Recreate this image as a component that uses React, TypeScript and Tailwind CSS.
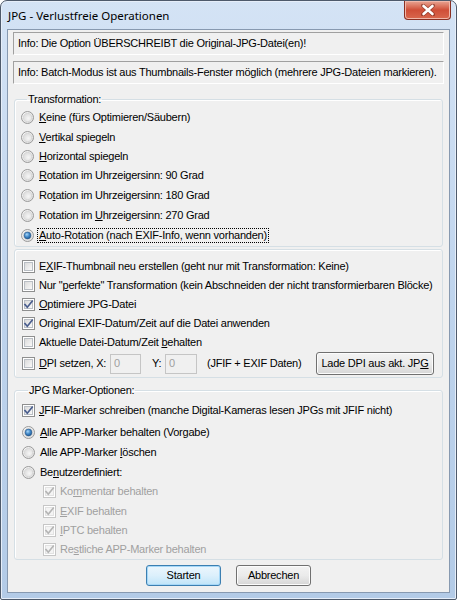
import React from "react";

const FONT = { fontFamily: '"Liberation Sans", Arial, sans-serif' };

function Radio({ checked }: { checked?: boolean }) {
  return (
    <svg width="13" height="13" viewBox="0 0 13 13" className="shrink-0">
      <defs>
        <radialGradient id="rbg" cx="0.35" cy="0.35" r="0.8">
          <stop offset="0" stopColor="#ffffff" />
          <stop offset="1" stopColor="#dadada" />
        </radialGradient>
        <radialGradient id="rin" cx="0.6" cy="0.6" r="0.7">
          <stop offset="0" stopColor="#f6f6f6" />
          <stop offset="1" stopColor="#d8d8d8" />
        </radialGradient>
        <radialGradient id="rdot" cx="0.4" cy="0.35" r="0.75">
          <stop offset="0" stopColor="#a8d6f8" />
          <stop offset="0.5" stopColor="#3f86c6" />
          <stop offset="1" stopColor="#1a4f86" />
        </radialGradient>
      </defs>
      <circle cx="6.5" cy="6.5" r="6" fill="url(#rbg)" stroke="#9a9a9a" strokeWidth="1" />
      <circle cx="6.5" cy="6.5" r="4.2" fill="url(#rin)" stroke="#cfcfcf" strokeWidth="0.6" />
      {checked && <circle cx="6.5" cy="6.5" r="3.4" fill="url(#rdot)" stroke="#1f4f80" strokeWidth="0.5" />}
    </svg>
  );
}

function Check({ checked, disabled }: { checked?: boolean; disabled?: boolean }) {
  return (
    <svg width="13" height="13" viewBox="0 0 13 13" className="shrink-0">
      <defs>
        <linearGradient id="cbg" x1="0" y1="0" x2="1" y2="1">
          <stop offset="0" stopColor="#d9d9d9" />
          <stop offset="1" stopColor="#fbfbfb" />
        </linearGradient>
      </defs>
      <rect x="0.5" y="0.5" width="12" height="12" fill="#ffffff" stroke={disabled ? "#c6c6c6" : "#8e8f8f"} />
      <rect x="2.5" y="2.5" width="8" height="8" fill={disabled ? "#f4f4f4" : "url(#cbg)"} stroke={disabled ? "#e2e2e2" : "#b9bec4"} strokeWidth="1" />
      {checked && (
        <path
          d="M3 6.6 L5.3 9.2 L10.2 3.2"
          fill="none"
          stroke={disabled ? "#b5b5b5" : "#4a5e8e"}
          strokeWidth="1.7"
          strokeLinecap="square"
        />
      )}
    </svg>
  );
}

function L({ pre, u, post }: { pre?: string; u: string; post?: string }) {
  return (
    <span className="whitespace-pre">
      {pre}
      <span className="underline underline-offset-[1px]">{u}</span>
      {post}
    </span>
  );
}

const radios: { h: string; label: React.ReactNode; checked?: boolean; focus?: boolean }[] = [
  { h: "h-[20px]", label: <L u="K" post="eine (fürs Optimieren/Säubern)" /> },
  { h: "h-[20px]", label: <L u="V" post="ertikal spiegeln" /> },
  { h: "h-[19px]", label: <L u="H" post="orizontal spiegeln" /> },
  { h: "h-[19px]", label: <L u="R" post="otation im Uhrzeigersinn: 90 Grad" /> },
  { h: "h-[20px]", label: <L pre="Ro" u="t" post="ation im Uhrzeigersinn: 180 Grad" /> },
  { h: "h-[20px]", label: <L pre="Rotation im " u="U" post="hrzeigersinn: 270 Grad" /> },
  { h: "h-[20px]", label: <L u="A" post="uto-Rotation (nach EXIF-Info, wenn vorhanden)" />, checked: true, focus: true },
];

const checks: { label: React.ReactNode; checked?: boolean }[] = [
  { label: <L pre="E" u="X" post="IF-Thumbnail neu erstellen (geht nur mit Transformation: Keine)" /> },
  { label: <L pre={'Nur "'} u="p" post={'erfekte" Transformation (kein Abschneiden der nicht transformierbaren Blöcke)'} /> },
  { label: <L u="O" post="ptimiere JPG-Datei" />, checked: true },
  { label: <L pre="Ori" u="g" post="inal EXIF-Datum/Zeit auf die Datei anwenden" />, checked: true },
  { label: <L pre="Aktuelle Datei-Datum/Zeit " u="b" post="ehalten" /> },
];

function Btn({ children, primary, className }: { children: React.ReactNode; primary?: boolean; className?: string }) {
  return (
    <div
      className={
        "flex items-center justify-center rounded-[3px] border text-black whitespace-nowrap " +
        (primary
          ? "border-[#3c7fb1] bg-gradient-to-b from-[#ecf6fd] via-[#dcf0fc] to-[#bfe4f9] shadow-[inset_0_0_0_1px_#a6d8f8] "
          : "border-[#707070] bg-gradient-to-b from-[#f3f3f3] via-[#ebebeb] to-[#d6d6d6] shadow-[inset_0_0_0_1px_#fcfcfc] ") +
        (className ?? "")
      }
    >
      {children}
    </div>
  );
}

function Info({ children, className }: { children: React.ReactNode; className?: string }) {
  return (
    <div
      className={
        "h-[23px] flex items-center pl-[4px] whitespace-nowrap border border-t-[#a0a0a0] border-l-[#a0a0a0] border-b-white border-r-white " +
        (className ?? "")
      }
    >
      {children}
    </div>
  );
}

export default function App() {
  return (
    <div className="w-[457px] h-[600px] bg-white text-[11px] leading-[13px] text-black" style={FONT}>
      <div className="w-full h-full rounded-t-[7px] rounded-b-[2px] border border-[#4e5a6b] bg-gradient-to-b from-[#d4e3f5] via-[#bfd4ed] to-[#b3cbe7] flex flex-col shadow-[inset_0_0_0_1px_#e6eef9]">
        {/* Title bar */}
        <div className="h-[28px] flex items-start justify-between shrink-0">
          <div
            className="pl-[7px] pt-[7px] text-[11.5px] leading-[16px] text-black"
            style={{ fontFamily: '"Noto Sans", "Open Sans", sans-serif' }}
          >
            JPG - Verlustfreie Operationen
          </div>
          <div className="mr-[5px] mt-[0px] w-[47px] h-[19px] rounded-b-[4px] border border-t-0 border-[#8a2f22] bg-gradient-to-b from-[#e8a493] via-[#cf4e37] to-[#d9674d] shadow-[inset_0_0_0_1px_#f0b7a9] flex items-center justify-center">
            <svg width="14" height="12" viewBox="0 0 14 12">
              <path d="M2 1.5 L12 10.5 M12 1.5 L2 10.5" stroke="#6b2418" strokeWidth="4" strokeLinecap="round" opacity="0.55" />
              <path d="M2.5 2 L11.5 10 M11.5 2 L2.5 10" stroke="#ffffff" strokeWidth="2.6" strokeLinecap="round" />
            </svg>
          </div>
        </div>

        {/* Client area */}
        <div className="mx-[6px] mb-[6px] flex-1 border border-[#8799b0] bg-[#f0f0f0] flex flex-col tracking-[-0.23px]">
          <div className="mx-[5px] mt-[2px]">
            <Info>Info: Die Option ÜBERSCHREIBT die Original-JPG-Datei(en)!</Info>
            <Info className="mt-[6px]">
              Info: Batch-Modus ist aus Thumbnails-Fenster möglich (mehrere JPG-Dateien markieren).
            </Info>
          </div>

          {/* Transformation */}
          <fieldset className="mx-[6px] mt-[9px] border border-[#d5dfe5] rounded-[3px] pl-[6px] pb-[1px] shadow-[inset_1px_1px_0_#ffffff]">
            <legend className="ml-[6px] px-[1px]">Transformation:</legend>
            <div className="flex flex-col pt-[1px]">
              {radios.map((r, i) => (
                <div key={i} className={r.h + " flex items-center gap-[4px]"}>
                  <Radio checked={r.checked} />
                  <span className={r.focus ? "outline outline-1 outline-dotted outline-black px-[1px]" : "px-[1px]"}>
                    {r.label}
                  </span>
                </div>
              ))}
            </div>
          </fieldset>

          {/* Check options */}
          <div className="mx-[6px] mt-[2px] border border-[#d5dfe5] rounded-[3px] pl-[7px] pt-[7px] pb-[2px] shadow-[inset_1px_1px_0_#ffffff]">
            {checks.map((c, i) => (
              <div key={i} className="h-[19px] flex items-center gap-[3px]">
                <Check checked={c.checked} />
                <span className="px-[1px]">{c.label}</span>
              </div>
            ))}
            <div className="h-[23px] flex items-center whitespace-nowrap">
              <Check />
              <span className="ml-[4px] w-[71px] shrink-0">
                <L u="D" post="PI setzen, X:" />
              </span>
              <div className="w-[31px] h-[20px] shrink-0 border border-[#c5c5c5] bg-[#f0f0f0] text-[#a0a0a0] pl-[3px] flex items-center">
                0
              </div>
              <span className="ml-[11px] w-[13px] shrink-0">Y:</span>
              <div className="w-[32px] h-[20px] shrink-0 border border-[#c5c5c5] bg-[#f0f0f0] text-[#a0a0a0] pl-[3px] flex items-center">
                0
              </div>
              <span className="ml-[10px] w-[109px] shrink-0">(JFIF + EXIF Daten)</span>
              <Btn className="w-[118px] h-[23px] shrink-0">
                <L pre="Lade DPI aus akt. JP" u="G" />
              </Btn>
            </div>
          </div>

          {/* JPG Marker-Optionen */}
          <fieldset className="mx-[6px] mt-[6px] border border-[#d5dfe5] rounded-[3px] pl-[7px] shadow-[inset_1px_1px_0_#ffffff]">
            <legend className="ml-[6px] px-[1px]">JPG Marker-Optionen:</legend>
            <div className="flex flex-col pt-[3px]">
              <div className="h-[20px] flex items-center gap-[3px]">
                <Check checked />
                <span className="px-[1px]">
                  <L u="J" post="FIF-Marker schreiben (manche Digital-Kameras lesen JPGs mit JFIF nicht)" />
                </span>
              </div>
              <div className="h-[2px]" />
              <div className="h-[20px] flex items-center gap-[4px]">
                <Radio checked />
                <span className="px-[1px]">
                  <L u="A" post="lle APP-Marker behalten (Vorgabe)" />
                </span>
              </div>
              <div className="h-[20px] flex items-center gap-[4px]">
                <Radio />
                <span className="px-[1px]">
                  <L pre="Alle APP-Marker " u="l" post="öschen" />
                </span>
              </div>
              <div className="h-[20px] flex items-center gap-[4px]">
                <Radio />
                <span className="px-[1px]">
                  <L pre="Be" u="n" post="utzerdefiniert:" />
                </span>
              </div>
              <div className="h-[19px] flex items-center gap-[3px] pl-[21px] text-[#a0a0a0]">
                <Check checked disabled />
                <span className="px-[1px]">
                  <L pre="Ko" u="m" post="mentar behalten" />
                </span>
              </div>
              <div className="h-[20px] flex items-center gap-[3px] pl-[21px] text-[#a0a0a0]">
                <Check checked disabled />
                <span className="px-[1px]">
                  <L u="E" post="XIF behalten" />
                </span>
              </div>
              <div className="h-[19px] flex items-center gap-[3px] pl-[21px] text-[#a0a0a0]">
                <Check checked disabled />
                <span className="px-[1px]">
                  <L u="I" post="PTC behalten" />
                </span>
              </div>
              <div className="h-[19px] flex items-center gap-[3px] pl-[21px] text-[#a0a0a0]">
                <Check checked disabled />
                <span className="px-[1px]">
                  <L pre="Re" u="s" post="tliche APP-Marker behalten" />
                </span>
              </div>
            </div>
          </fieldset>

          {/* Buttons */}
          <div className="mt-[5px] flex justify-center gap-[15px]">
            <Btn primary className="w-[75px] h-[21px]">
              Starten
            </Btn>
            <Btn className="w-[75px] h-[21px]">Abbrechen</Btn>
          </div>
        </div>
      </div>
    </div>
  );
}
